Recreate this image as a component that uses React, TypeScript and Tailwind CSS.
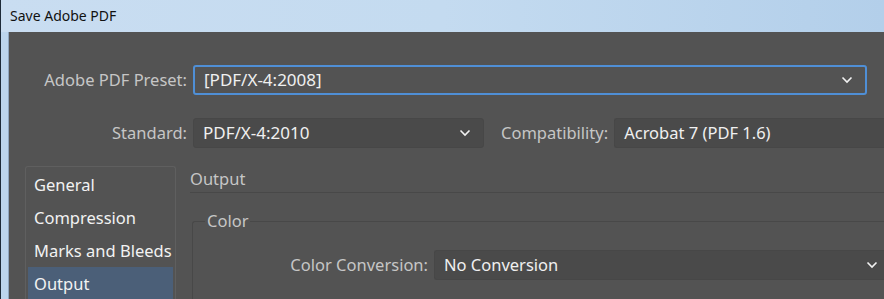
import React from "react";

const Chevron = () => (
  <svg width="12" height="8" viewBox="0 0 12 8" fill="none" className="shrink-0">
    <path d="M1.5 1.5 L6 6 L10.5 1.5" stroke="#f2f2f2" strokeWidth="1.6" />
  </svg>
);

const Select = ({
  value,
  className,
  focused,
  noArrow,
}: {
  value: string;
  className: string;
  focused?: boolean;
  noArrow?: boolean;
}) => (
  <div
    className={
      "flex h-[30px] items-center justify-between rounded-[3px] pl-[9px] pr-[12px] text-[#f0f0f0] " +
      (focused ? "border-2 border-[#4f8fd6] bg-[#535353] " : "border border-[#474747] bg-[#4a4a4a] ") +
      className
    }
  >
    <span className="whitespace-nowrap">{value}</span>
    {!noArrow && <Chevron />}
  </div>
);

const App = () => {
  return (
    <div
      className="flex h-[299px] w-[884px] flex-col overflow-hidden bg-[#bcd5ed] text-[16.5px]"
      style={{ fontFamily: '"Noto Sans", "Open Sans", sans-serif' }}
    >
      <div className="flex h-[32px] shrink-0 items-center border-l border-[#1d2a38] bg-gradient-to-r from-[#c9ddf1] via-[#c4dbf0] to-[#b3cfea] pl-[9px] pb-[1px] text-[14px] text-[#111]">
        Save Adobe PDF
      </div>

      <div className="flex flex-1">
        <div className="w-[9px] shrink-0 border-l border-[#1d2a38] border-r border-r-[#8fa6bf] bg-[#bcd5ed]" />

        <div className="flex min-w-0 flex-1 flex-col overflow-hidden bg-[#535353] pt-[33px]">
          <div className="flex items-center">
            <div className="w-[184px] pr-[6px] text-right text-[#c6c6c6]">Adobe PDF Preset:</div>
            <Select value="[PDF/X-4:2008]" focused className="w-[674px] text-[17px]" />
          </div>

          <div className="mt-[23px] flex items-center">
            <div className="w-[184px] pr-[6px] text-right text-[#c6c6c6]">Standard:</div>
            <Select value="PDF/X-4:2010" className="w-[291px] text-[17px]" />
            <div className="ml-[17px] pr-[6px] text-[#c6c6c6]">Compatibility:</div>
            <Select value="Acrobat 7 (PDF 1.6)" noArrow className="flex-1 rounded-r-none border-r-0" />
          </div>

          <div className="mt-[18px] flex flex-1">
            <div className="ml-[16px] flex w-[151px] flex-col rounded-tl-[3px] rounded-tr-[3px] border border-b-0 border-[#5f5f5f] px-[2px] pt-[2px] text-[#f2f2f2]">
              <div className="flex h-[33px] items-center pl-[6px]">General</div>
              <div className="flex h-[33px] items-center pl-[6px]">Compression</div>
              <div className="flex h-[32px] items-center whitespace-nowrap pl-[6px]">Marks and Bleeds</div>
              <div className="flex h-[34px] items-center bg-[#4b5f78] pl-[6px]">Output</div>
            </div>

            <div className="ml-[14px] flex flex-1 flex-col">
              <div className="flex h-[27px] items-center border-b border-[#484848] text-[#c6c6c6]">Output</div>

              <div className="relative ml-[2px] mt-[28px] flex-1 rounded-tl-[3px] border-l border-t border-[#484848]">
                <span className="absolute left-[12px] top-[-13px] bg-[#535353] px-[2px] text-[#c6c6c6]">Color</span>
                <div className="mt-[28px] flex items-center">
                  <div className="w-[241px] pr-[6px] text-right text-[#c6c6c6]">Color Conversion:</div>
                  <Select value="No Conversion" className="mr-[-6px] flex-1 rounded-r-none border-r-0 pr-[0px]" />
                </div>
              </div>
            </div>
          </div>
        </div>
      </div>
    </div>
  );
};

export default App;
